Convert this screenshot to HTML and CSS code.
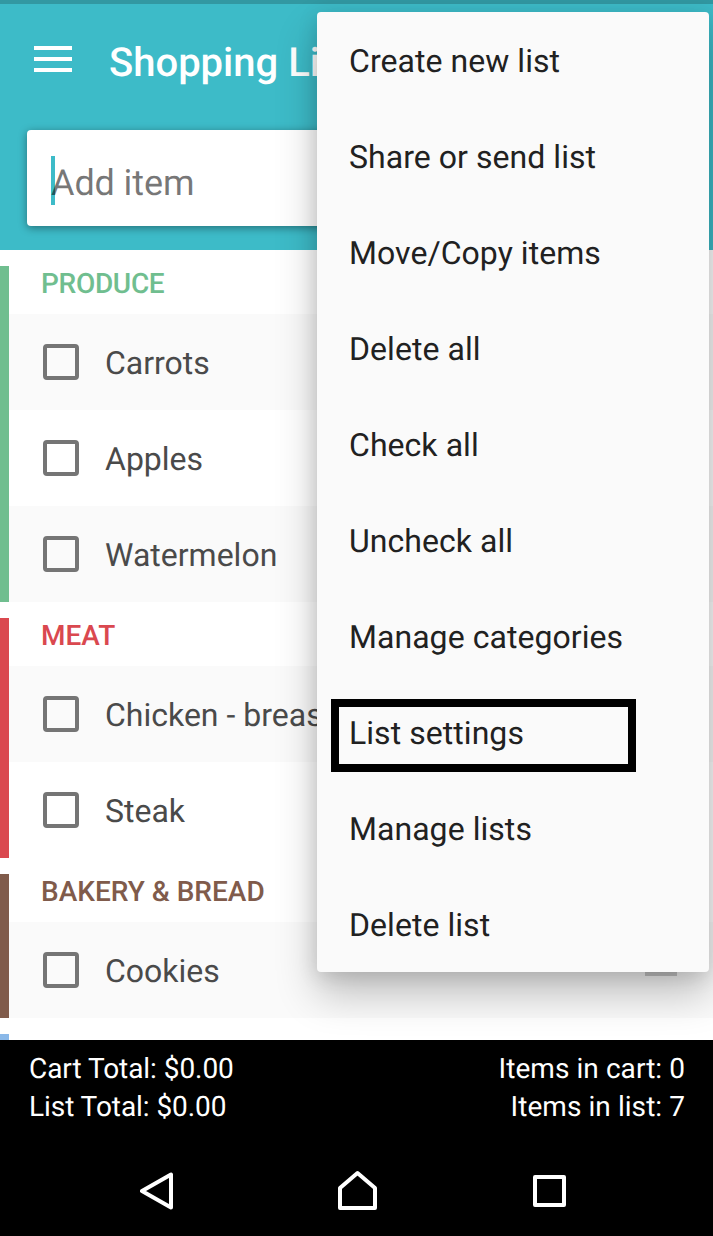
FILE: index.html
```
<!DOCTYPE html>
<html lang="en">
  <head>
    <meta charset="utf-8">
    <title>Shopping List</title>
    <link rel="stylesheet" href="styles.css">
  </head>
  <body>
    <div class="screen">
      <header class="header">
        <div class="title-row">
          <svg class="menu-icon" width="38" height="26" viewBox="0 0 38 26">
            <path d="M0 2h38M0 13h38M0 24h38" stroke="#fff" stroke-width="4"/>
          </svg>
          <h1>Shopping List</h1>
        </div>
        <div class="add-item">
          <span class="cursor"></span>
          <span class="placeholder">Add item</span>
        </div>
      </header>

      <main class="list">
        <section class="category produce">
          <h2>PRODUCE</h2>
          <div class="item shaded"><span class="checkbox"></span><span class="name">Carrots</span></div>
          <div class="item"><span class="checkbox"></span><span class="name">Apples</span></div>
          <div class="item shaded"><span class="checkbox"></span><span class="name">Watermelon</span></div>
        </section>
        <section class="category meat">
          <h2>MEAT</h2>
          <div class="item shaded"><span class="checkbox"></span><span class="name">Chicken - breast</span></div>
          <div class="item"><span class="checkbox"></span><span class="name">Steak</span></div>
        </section>
        <section class="category bakery">
          <h2>BAKERY &amp; BREAD</h2>
          <div class="item shaded">
            <span class="checkbox"></span><span class="name">Cookies</span>
            <svg class="handle" width="48" height="48" viewBox="0 0 24 24">
              <path d="M4 9h16v2H4zM4 13h16v2H4z" fill="#c8c8c8"/>
            </svg>
          </div>
        </section>
        <section class="category dairy"></section>
      </main>

      <footer class="totals">
        <div class="left">
          <p>Cart Total: $0.00</p>
          <p>List Total: $0.00</p>
        </div>
        <div class="right">
          <p>Items in cart: 0</p>
          <p>Items in list: 7</p>
        </div>
      </footer>

      <nav class="navbar">
        <svg width="34" height="38" viewBox="0 0 34 38">
          <path d="M31 2.5v33L2 19z"/>
        </svg>
        <svg class="home" width="39" height="40" viewBox="0 0 39 40">
          <path d="M2 38h35V18L19.500 3 2 18z"/>
        </svg>
        <svg width="34" height="34" viewBox="0 0 34 34">
          <path d="M2 3h29v28H2z"/>
        </svg>
      </nav>

      <!-- overflow menu -->
      <div class="menu-clip">
        <ul class="menu">
          <li>Create new list</li>
          <li>Share or send list</li>
          <li>Move/Copy items</li>
          <li>Delete all</li>
          <li>Check all</li>
          <li>Uncheck all</li>
          <li>Manage categories</li>
          <li class="selected">List settings</li>
          <li>Manage lists</li>
          <li>Delete list</li>
        </ul>
      </div>
    </div>
  </body>
</html>
```

FILE: styles.css
```
* {
  box-sizing: border-box;
}
body {
  margin: 0;
  font-family: Roboto, sans-serif;
  text-rendering: geometricPrecision;
}
h1, h2, p, ul {
  margin: 0;
  padding: 0;
}
.screen {
  position: relative;
  width: 713px;
  height: 1236px;
  overflow: hidden;
  display: flex;
  flex-direction: column;
  background-color: white;
}

/* header */
.header {
  height: 250px;
  flex: none;
  border-top: 4px solid #3298a2;
  background-color: #3dbbc8;
}
.title-row {
  display: flex;
  align-items: center;
  height: 112px;
  padding-left: 34px;
}
.menu-icon {
  display: block;
  margin-right: 37px;
  margin-bottom: 2px;
}
h1 {
  padding-top: 6px;
  font-size: 40px;
  font-weight: 500;
  line-height: 48px;
  color: white;
  white-space: nowrap;
}
.add-item {
  display: flex;
  align-items: center;
  height: 96px;
  margin: 14px 27px 0;
  padding-left: 24px;
  border-radius: 4px;
  background-color: white;
  box-shadow: 0 2px 8px rgba(0, 0, 0, 0.4);
}
.cursor {
  width: 4px;
  height: 49px;
  margin-right: -4px;
  margin-top: 5px;
  background-color: #3dbbc8;
}
.placeholder {
  padding-top: 10px;
  font-size: 36px;
  letter-spacing: -0.1px;
  color: rgba(0, 0, 0, 0.54);
  z-index: 1;
}

/* list */
.list {
  height: 790px;
  flex: none;
  padding-top: 16px;
  display: flex;
  flex-direction: column;
  gap: 16px;
  overflow: hidden;
}
.category {
  flex: none;
  border-left: 9px solid;
}
.category h2 {
  height: 48px;
  padding-left: 32px;
  font-size: 28px;
  font-weight: 500;
  line-height: 35px;
}
.produce {
  color: #70be8f;
}
.produce h2 {
  letter-spacing: -0.3px;
}
.meat {
  color: #da484f;
}
.bakery {
  color: #805b4b;
}
.dairy {
  height: 96px;
  color: #8ab8e8;
}
.item {
  display: flex;
  align-items: center;
  height: 96px;
  padding: 0 28px 0 34px;
  font-size: 32px;
  color: #4a4a4a;
}
.shaded {
  background-color: #fafafa;
}
.checkbox {
  width: 36px;
  height: 36px;
  margin-right: 26px;
  border: 4px solid #757575;
  border-radius: 4px;
}
.name {
  padding-top: 2px;
}
.handle {
  margin-left: auto;
}

/* bottom bars */
.totals {
  display: flex;
  justify-content: space-between;
  height: 106px;
  padding: 10px 28px 0 29px;
  font-size: 28px;
  line-height: 38px;
  color: white;
  background-color: black;
}
.left {
  letter-spacing: -0.06px;
}
.right {
  text-align: right;
  letter-spacing: 0.06px;
}
.navbar {
  flex: 1;
  display: flex;
  align-items: center;
  justify-content: space-between;
  padding: 0 146px 0 140px;
  background-color: black;
}
.navbar path {
  fill: none;
  stroke: white;
  stroke-width: 4;
  stroke-linejoin: round;
}
.home {
  margin: 0 0 2px 8px;
}

/* popup */
.menu-clip {
  position: absolute;
  top: 0;
  left: 0;
  width: 713px;
  height: 1040px;
  overflow: hidden;
}
.menu {
  position: absolute;
  top: 12px;
  left: 317px;
  width: 392px;
  border-radius: 4px;
  list-style: none;
  background-color: #fafafa;
  box-shadow: 0 22px 42px rgba(0, 0, 0, 0.24), 0 4px 20px rgba(0, 0, 0, 0.13);
}
.menu li {
  height: 96px;
  padding: 1px 32px 0;
  font-size: 32px;
  line-height: 96px;
  letter-spacing: 0.05px;
  color: #212121;
  white-space: nowrap;
}
.menu .selected {
  position: relative;
}
.selected::before {
  content: "";
  box-sizing: border-box;
  position: absolute;
  left: 14px;
  top: 15px;
  width: 305px;
  height: 73px;
  border: 8px solid black;
}
```
